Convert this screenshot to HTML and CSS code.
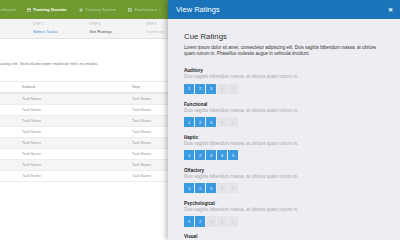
FILE: index.html
```html
<!DOCTYPE html>
<html>
<head>
    <link rel="stylesheet" href="styles.css">
</head>
<body>
    <div class="page">
        <nav class="topnav">
            <span class="nav-item cut">shboard</span>
            <span class="nav-item active">
                <svg class="nav-icon" viewBox="0 0 10 10"><rect x="1" y="2" width="8" height="7" fill="none" stroke="#fff" stroke-width="1.4"/><rect x="1" y="2" width="8" height="2.4" fill="#fff"/></svg>
                Training Domain
            </span>
            <span class="nav-item">
                <svg class="nav-icon" viewBox="0 0 10 10"><circle cx="5" cy="5" r="3" fill="none" stroke="#fff" stroke-width="2" stroke-dasharray="1.4 0.9"/><circle cx="5" cy="5" r="2.2" fill="none" stroke="#fff" stroke-width="1.2"/></svg>
                Training System
            </span>
            <span class="nav-item">
                <svg class="nav-icon" viewBox="0 0 10 10"><rect x="1" y="1.5" width="8" height="7" fill="none" stroke="#fff" stroke-width="1.3"/><rect x="3" y="3.6" width="4" height="1" fill="#fff"/><rect x="3" y="5.6" width="4" height="1" fill="#fff"/></svg>
                Evaluations <span class="caret">&#9662;</span>
            </span>
            <span class="nav-item">
                <svg class="nav-icon" viewBox="0 0 10 10"><circle cx="5" cy="3" r="2" fill="#fff"/><path d="M1 9.5 Q5 4 9 9.5 Z" fill="#fff"/></svg>
            </span>
        </nav>

        <div class="steps">
            <div class="step current">
                <small>STEP 2</small>
                <span>Select Tasks</span>
            </div>
            <div class="step">
                <small>STEP 3</small>
                <span>Set Ratings</span>
            </div>
            <div class="step later">
                <small>STEP 4</small>
                <span>Summary</span>
            </div>
        </div>

        <p class="intro">acing elit. Sed ullamcorper molestie felis eu mattis.</p>

        <div class="task-table">
            <div class="task-row head"><span>Subtask</span><span>Step</span></div>
            <div class="task-row"><span>Task Name</span><span>Task Name</span></div>
            <div class="task-row"><span>Task Name</span><span>Task Name</span></div>
            <div class="task-row"><span>Task Name</span><span>Task Name</span></div>
            <div class="task-row"><span>Task Name</span><span>Task Name</span></div>
            <div class="task-row"><span>Task Name</span><span>Task Name</span></div>
            <div class="task-row"><span>Task Name</span><span>Task Name</span></div>
            <div class="task-row"><span>Task Name</span><span>Task Name</span></div>
            <div class="task-row"><span>Task Name</span><span>Task Name</span></div>
        </div>
    </div>

    <aside class="drawer">
        <div class="drawer-head">
            <span class="drawer-title">View Ratings</span>
            <span class="close">&#10006;</span>
        </div>
        <div class="drawer-body">
            <h3>Cue Ratings</h3>
            <p class="lead">Lorem ipsum dolor sit amet, consectetur adipiscing elit. Duis sagittis bibendum massa, at ultrices quam rutrum in. Phasellus molestie augue in vehicula tincidunt.</p>

            <div class="cue">
                <div class="cue-name">Auditory</div>
                <div class="cue-desc">Duis sagittis bibendum massa, at ultrices quam rutrum in.</div>
                <div class="scale"><span class="on">1</span><span class="on">2</span><span class="on">3</span><span>4</span><span>5</span></div>
            </div>
            <div class="cue">
                <div class="cue-name">Functional</div>
                <div class="cue-desc">Duis sagittis bibendum massa, at ultrices quam rutrum in.</div>
                <div class="scale"><span class="on">1</span><span class="on">2</span><span class="on">3</span><span>4</span><span>5</span></div>
            </div>
            <div class="cue">
                <div class="cue-name">Haptic</div>
                <div class="cue-desc">Duis sagittis bibendum massa, at ultrices quam rutrum in.</div>
                <div class="scale"><span class="on">1</span><span class="on">2</span><span class="on">3</span><span class="on">4</span><span class="on">5</span></div>
            </div>
            <div class="cue">
                <div class="cue-name">Olfactory</div>
                <div class="cue-desc">Duis sagittis bibendum massa, at ultrices quam rutrum in.</div>
                <div class="scale"><span class="on">1</span><span class="on">2</span><span class="on">3</span><span>4</span><span>5</span></div>
            </div>
            <div class="cue">
                <div class="cue-name">Psychological</div>
                <div class="cue-desc">Duis sagittis bibendum massa, at ultrices quam rutrum in.</div>
                <div class="scale"><span class="on">1</span><span class="on">2</span><span>3</span><span>4</span><span>5</span></div>
            </div>
            <div class="cue">
                <div class="cue-name">Visual</div>
            </div>
        </div>
    </aside>
</body>
</html>
```

FILE: styles.css
```css
body {
    margin: 0;
    width: 400px;
    height: 240px;
    overflow: hidden;
    font-family: "Liberation Sans", Arial, sans-serif;
    background-color: #fff;
    position: relative;
}

.page {
    width: 400px;
}

.topnav {
    height: 19px;
    background-color: #6e9a30;
    display: flex;
    align-items: center;
    font-size: 4.3px;
    color: rgba(255, 255, 255, 0.55);
}

.nav-item {
    display: flex;
    align-items: center;
    gap: 2.5px;
    margin-right: 12px;
}

.nav-item.cut {
    margin-right: 11px;
}

.nav-item.active {
    color: #fff;
    font-weight: bold;
}

.nav-icon {
    width: 4px;
    height: 4px;
    opacity: 0.8;
}

.caret {
    font-size: 3px;
}

.steps {
    height: 19px;
    background-color: #f4f4f5;
    border-bottom: 1px solid #e2e2e2;
    display: flex;
    padding-left: 33px;
}

.step {
    width: 56.5px;
    display: flex;
    flex-direction: column;
    justify-content: center;
    gap: 2.5px;
    font-size: 4.4px;
    color: #555;
}

.step small {
    font-size: 2.6px;
    letter-spacing: 0.3px;
    color: #aaa;
}

.step.current span {
    color: #3b8fd6;
}

.step.later span {
    color: #c9c9c9;
}

.intro {
    margin: 22px 0 0;
    font-size: 4.4px;
    line-height: 6px;
    color: #7a7a8a;
}

.task-table {
    margin-top: 13.5px;
    width: 170px;
    border-bottom: 1px solid #ececec;
}

.task-row {
    height: 10px;
    display: grid;
    grid-template-columns: 110px 1fr;
    align-items: center;
    padding-left: 22px;
    border-top: 1px solid #ececec;
    font-size: 3.8px;
    color: #9a9a9a;
}

.task-row:nth-child(even) {
    background-color: #f5f5f6;
}

.task-row.head {
    border-bottom: 1px solid #e4e4e4;
    color: #888;
}

.drawer {
    position: absolute;
    top: 0;
    right: 0;
    bottom: 0;
    width: 232px;
    background-color: #eeeef2;
    box-shadow: -2px 0 5px rgba(0, 0, 0, 0.25);
}

.drawer-head {
    height: 19px;
    background-color: #1b74b9;
    display: flex;
    align-items: center;
    justify-content: space-between;
    padding: 0 7px 0 8px;
    color: #fff;
}

.drawer-title {
    font-size: 7.5px;
}

.close {
    font-size: 6px;
    color: #cfe3f3;
}

.drawer-body {
    padding: 13px 20px 0 16px;
}

.drawer-body h3 {
    margin: 0 0 3px;
    font-size: 7.8px;
    line-height: 10px;
    font-weight: normal;
    color: #333;
}

.lead {
    margin: 0 0 12px;
    font-size: 4.5px;
    line-height: 5.7px;
    color: #333;
}

.cue {
    margin-bottom: 7.3px;
}

.cue-name {
    font-size: 4.6px;
    line-height: 6px;
    font-weight: bold;
    color: #222;
}

.cue-desc {
    font-size: 4.5px;
    line-height: 6px;
    color: #a8a8ac;
    margin-bottom: 3.3px;
}

.scale {
    display: flex;
    gap: 1px;
}

.scale span {
    width: 10px;
    height: 10.5px;
    display: flex;
    align-items: center;
    justify-content: center;
    font-size: 4px;
    background-color: #e4e4e7;
    color: #c4c4c8;
}

.scale span.on {
    background-color: #3b9be0;
    color: #fff;
}
```
